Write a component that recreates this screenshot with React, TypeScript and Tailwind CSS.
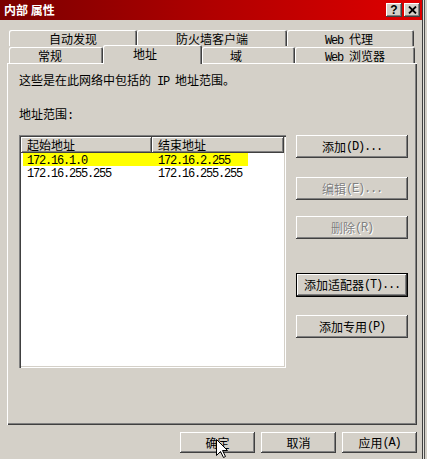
const latin = "whitespace-pre font-['Liberation_Mono',monospace] text-[12px] tracking-[-1.2px]";

const raised =
  'bg-[#d4d0c8] shadow-[inset_-1px_-1px_#404040,inset_1px_1px_#ffffff,inset_-2px_-2px_#808080]';

// Half-width runs get the mono face, everything else stays on the CJK face.
function Txt({ children }: { children: string }) {
  const parts = children.split(/([\x00-\xff]+)/).filter(Boolean);
  return (
    <>
      {parts.map((p, i) =>
        /^[\x00-\xff]+$/.test(p) ? (
          <span key={i} className={latin}>
            {p}
          </span>
        ) : (
          <span key={i}>{p}</span>
        ),
      )}
    </>
  );
}

function Btn({
  label,
  w,
  h,
  disabled,
  primary,
  className = '',
}: {
  label: string;
  w: string;
  h: string;
  disabled?: boolean;
  primary?: boolean;
  className?: string;
}) {
  const inner = (
    <div
      className={`flex h-full w-full items-center justify-center ${raised} ${
        disabled ? 'text-[#808080] [text-shadow:1px_1px_0_#ffffff]' : 'text-black'
      }`}
    >
      <Txt>{label}</Txt>
    </div>
  );
  if (primary) {
    return <div className={`${w} ${h} border border-black ${className}`}>{inner}</div>;
  }
  return <div className={`${w} ${h} ${className}`}>{inner}</div>;
}

function Tab({
  label,
  w,
  pl,
  selected,
}: {
  label: string;
  w: string;
  pl: string;
  selected?: boolean;
}) {
  const tabEdge =
    'rounded-t-[2px] bg-[#d4d0c8] shadow-[inset_1px_1px_#ffffff,inset_-1px_0_#404040,inset_-2px_0_#808080]';
  if (selected) {
    return (
      <div className={`${w} ${pl} -mt-[2px] h-[19px] pt-[3px] ${tabEdge}`}>
        <Txt>{label}</Txt>
      </div>
    );
  }
  return (
    <div className={`${w} ${pl} h-[16px] pt-[3px] ${tabEdge}`}>
      <Txt>{label}</Txt>
    </div>
  );
}

function Cursor() {
  return (
    <svg className="absolute left-[216px] top-[439px]" width="13" height="20" viewBox="0 0 13 20">
      <path
        d="M0.5 0.5 L0.5 16.5 L4.5 12.5 L7.5 18.5 L9.5 17.5 L6.5 11.5 L11.5 11.5 Z"
        fill="#ffffff"
        stroke="#000000"
        strokeWidth="1"
        strokeLinejoin="miter"
      />
    </svg>
  );
}

const rows = [
  { from: '172.16.1.0', to: '172.16.2.255', selected: true },
  { from: '172.16.255.255', to: '172.16.255.255', selected: false },
];

export default function App() {
  return (
    <div className="relative flex h-[459px] w-[427px] overflow-hidden bg-[#d4d0c8] font-['Noto_Sans_CJK_SC',sans-serif] text-[12px] leading-[12px] text-black">
      <div className="flex w-[423px] flex-col pr-[1px] shadow-[inset_-1px_0_#404040]">
        {/* title bar */}
        <div className="flex h-[20px] items-center justify-between bg-gradient-to-r from-[#7a0000] via-[#b00000] to-[#e00000] pl-[4px] pr-[2px]">
          <span className="font-bold text-white">内部 属性</span>
          <div className="flex gap-[2px]">
            <div className={`flex h-[14px] w-[16px] items-center justify-center ${raised}`}>
              <span className="font-['Liberation_Sans',sans-serif] text-[12px] font-bold leading-none">?</span>
            </div>
            <div className={`flex h-[14px] w-[16px] items-center justify-center ${raised}`}>
              <svg width="9" height="8" viewBox="0 0 9 8">
                <path d="M1 0.5 L8 7.5 M8 0.5 L1 7.5" stroke="#000" strokeWidth="1.8" />
              </svg>
            </div>
          </div>
        </div>

        <div className="flex flex-col pl-[7px] pr-[5px]">
          {/* tabs */}
          <div className="mt-[10px] flex h-[17px] pl-[2px]">
            <Tab label="自动发现" w="w-[128px]" pl="pl-[40px]" />
            <Tab label="防火墙客户端" w="w-[150px]" pl="pl-[39px]" />
            <Tab label="Web 代理" w="w-[127px]" pl="pl-[38px]" />
          </div>
          <div className="relative z-10 -mb-[1px] flex h-[17px] items-start pl-[2px]">
            <Tab label="常规" w="w-[94px]" pl="pl-[29px]" />
            <Tab label="地址" w="w-[99px]" pl="pl-[30px]" selected />
            <Tab label="域" w="w-[93px]" pl="pl-[28px]" />
            <Tab label="Web 浏览器" w="w-[120px]" pl="pl-[30px]" />
          </div>

          {/* page */}
          <div className="flex h-[362px] flex-col pl-[12px] pt-[11px] shadow-[inset_1px_1px_#ffffff,inset_-1px_-1px_#404040,inset_-2px_-2px_#808080]">
            <div>
              <Txt>这些是在此网络中包括的 IP 地址范围。</Txt>
            </div>
            <div className="mt-[20px]">
              <Txt>地址范围:</Txt>
            </div>

            <div className="mt-[13px] flex items-start">
              <div className="h-[233px] w-[267px] bg-white p-[2px] shadow-[inset_1px_1px_#808080,inset_2px_2px_#404040,inset_-1px_-1px_#ffffff,inset_-2px_-2px_#d4d0c8]">
                <div className="flex h-[16px]">
                  <div className={`flex w-[131px] items-center pl-[6px] ${raised}`}>
                    <Txt>起始地址</Txt>
                  </div>
                  <div className={`flex flex-1 items-center pl-[6px] ${raised}`}>
                    <Txt>结束地址</Txt>
                  </div>
                </div>
                {rows.map((r) => (
                  <div key={r.from} className="flex h-[13px] pl-[2px]">
                    <div className={`flex w-[225px] items-center ${r.selected ? 'bg-[#ffff00]' : ''}`}>
                      <div className="w-[131px] pl-[4px]">
                        <Txt>{r.from}</Txt>
                      </div>
                      <div className="pl-[4px]">
                        <Txt>{r.to}</Txt>
                      </div>
                    </div>
                  </div>
                ))}
              </div>

              <div className="ml-[10px] flex flex-col">
                <Btn label="添加(D)..." w="w-[112px]" h="h-[23px]" />
                <Btn label="编辑(E)..." w="w-[112px]" h="h-[23px]" disabled className="mt-[19px]" />
                <Btn label="删除(R)" w="w-[112px]" h="h-[23px]" disabled className="mt-[16px]" />
                <Btn label="添加适配器(T)..." w="w-[112px]" h="h-[24px]" primary className="mt-[34px]" />
                <Btn label="添加专用(P)" w="w-[112px]" h="h-[23px]" className="mt-[18px]" />
              </div>
            </div>
          </div>

          {/* dialog buttons */}
          <div className="mt-[7px] flex justify-end gap-[6px]">
            <Btn label="确定" w="w-[75px]" h="h-[21px]" />
            <Btn label="取消" w="w-[75px]" h="h-[21px]" />
            <Btn label="应用(A)" w="w-[75px]" h="h-[21px]" />
          </div>
        </div>
      </div>

      {/* edge of the window behind */}
      <div className="flex w-[4px]">
        <div className="w-[1px] bg-[#e4e2dc]" />
        <div className="w-[1px] bg-[#505050]" />
        <div className="flex-1 bg-[#d4d0c8]" />
      </div>

      <Cursor />
    </div>
  );
}
